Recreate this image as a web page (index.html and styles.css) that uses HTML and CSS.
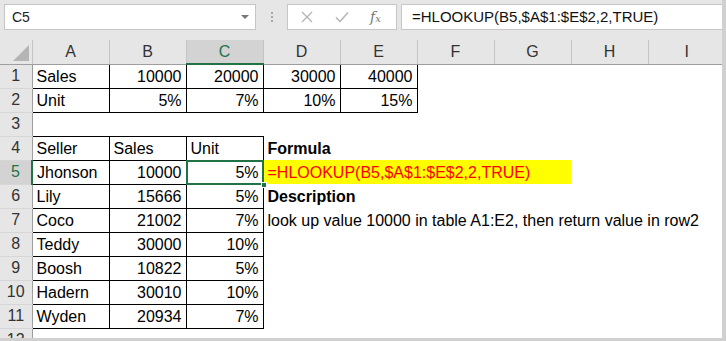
FILE: index.html
```html
<!DOCTYPE html>
<html lang="en">
<head>
  <meta charset="UTF-8">
  <title>HLOOKUP example</title>
  <link rel="stylesheet" href="styles.css">
</head>
<body>
<div class="frame">
  <div class="toolbar">
    <div class="name-box">
      <span>C5</span>
      <span class="caret"></span>
    </div>
    <div class="dots"><i></i><i></i><i></i></div>
    <div class="fx-box">
      <svg width="14" height="14" viewBox="0 0 14 14"><path d="M2 2 L12 12 M12 2 L2 12" stroke="#b3b3b3" stroke-width="1.3" fill="none"/></svg>
      <svg width="16" height="14" viewBox="0 0 16 14"><path d="M2 7.5 L6 11.5 L14 2.5" stroke="#b3b3b3" stroke-width="1.5" fill="none"/></svg>
      <span class="fx">f<small>x</small></span>
    </div>
    <div class="formula-box">=HLOOKUP(B5,$A$1:$E$2,2,TRUE)</div>
  </div>

  <table class="sheet">
    <colgroup>
      <col class="rh-col">
      <col><col><col><col><col><col><col><col><col>
    </colgroup>
    <tr class="col-heads">
      <th class="corner"><span class="tri"></span></th>
      <th>A</th><th>B</th><th class="sel-head">C</th><th>D</th><th>E</th><th>F</th><th>G</th><th>H</th><th>I</th>
    </tr>
    <tr>
      <th class="rh">1</th>
      <td class="b">Sales</td><td class="b num">10000</td><td class="b num">20000</td><td class="b num">30000</td><td class="b num">40000</td><td></td><td></td><td></td><td></td>
    </tr>
    <tr>
      <th class="rh">2</th>
      <td class="b">Unit</td><td class="b num">5%</td><td class="b num">7%</td><td class="b num">10%</td><td class="b num">15%</td><td></td><td></td><td></td><td></td>
    </tr>
    <tr>
      <th class="rh">3</th>
      <td></td><td></td><td></td><td></td><td></td><td></td><td></td><td></td><td></td>
    </tr>
    <tr>
      <th class="rh">4</th>
      <td class="b">Seller</td><td class="b">Sales</td><td class="b">Unit</td><td class="bold">Formula</td><td></td><td></td><td></td><td></td><td></td>
    </tr>
    <tr>
      <th class="rh sel-row">5</th>
      <td class="b">Jhonson</td><td class="b num">10000</td><td class="b num active">5%<span class="cursor"></span><span class="handle"></span></td>
      <td class="hl" colspan="4">=HLOOKUP(B5,$A$1:$E$2,2,TRUE)</td><td></td><td></td>
    </tr>
    <tr>
      <th class="rh">6</th>
      <td class="b">Lily</td><td class="b num">15666</td><td class="b num">5%</td><td class="bold">Description</td><td></td><td></td><td></td><td></td><td></td>
    </tr>
    <tr>
      <th class="rh">7</th>
      <td class="b">Coco</td><td class="b num">21002</td><td class="b num">7%</td><td class="spill" colspan="6">look up value 10000 in table A1:E2, then return value in row2</td>
    </tr>
    <tr>
      <th class="rh">8</th>
      <td class="b">Teddy</td><td class="b num">30000</td><td class="b num">10%</td><td></td><td></td><td></td><td></td><td></td><td></td>
    </tr>
    <tr>
      <th class="rh">9</th>
      <td class="b">Boosh</td><td class="b num">10822</td><td class="b num">5%</td><td></td><td></td><td></td><td></td><td></td><td></td>
    </tr>
    <tr>
      <th class="rh">10</th>
      <td class="b">Hadern</td><td class="b num">30010</td><td class="b num">10%</td><td></td><td></td><td></td><td></td><td></td><td></td>
    </tr>
    <tr>
      <th class="rh">11</th>
      <td class="b">Wyden</td><td class="b num">20934</td><td class="b num">7%</td><td></td><td></td><td></td><td></td><td></td><td></td>
    </tr>
    <tr>
      <th class="rh">12</th>
      <td></td><td></td><td></td><td></td><td></td><td></td><td></td><td></td><td></td>
    </tr>
  </table>
</div>
</body>
</html>
```

FILE: styles.css
```css
* { box-sizing: border-box; }
html, body { margin: 0; padding: 0; background: #fff; }
body { font-family: "Liberation Sans", Arial, sans-serif; color: #000; overflow: hidden; }

.frame {
  width: 726px;
  height: 341px;
  overflow: hidden;
  background: #fff;
  border-right: 4px solid #d0d0d0;
  border-bottom: 3px solid #d0d0d0;
}

/* formula bar */
.toolbar {
  height: 40px;
  background: #e6e6e6;
  display: flex;
  align-items: flex-start;
  padding: 4px 0 0 4px;
}
.name-box {
  width: 252px;
  height: 26px;
  background: #fff;
  border: 1px solid #c6c6c6;
  display: flex;
  align-items: center;
  justify-content: space-between;
  padding: 0 6px 0 7px;
  font-size: 14px;
  color: #222;
}
.caret {
  width: 0; height: 0;
  border-left: 4px solid transparent;
  border-right: 4px solid transparent;
  border-top: 4px solid #777;
}
.dots {
  width: 31px;
  height: 26px;
  display: flex;
  flex-direction: column;
  align-items: center;
  justify-content: center;
  gap: 2px;
}
.dots i { width: 2px; height: 2px; background: #a8a8a8; display: block; }
.fx-box {
  width: 110px;
  height: 26px;
  background: #fff;
  border: 1px solid #c6c6c6;
  display: flex;
  align-items: center;
  padding-left: 12px;
}
.fx-box svg:first-child { margin-right: 20px; }
.fx-box svg:nth-child(2) { margin-right: 20px; }
.fx {
  font-family: "DejaVu Serif", "Liberation Serif", serif;
  font-style: italic;
  font-size: 14px;
  color: #777;
}
.fx small { font-size: 10px; }
.formula-box {
  flex: 1;
  margin-left: 4px;
  height: 26px;
  background: #fff;
  border: 1px solid #c6c6c6;
  border-right: none;
  font-size: 15px;
  padding: 3px 0 0 10px;
  color: #111;
}

/* grid */
.sheet {
  border-collapse: collapse;
  table-layout: fixed;
  width: 725px;
  font-size: 16px;
}
.sheet col { width: 77px; }
.sheet col.rh-col { width: 32px; }
.sheet tr { height: 24px; }
.sheet td {
  padding: 0 4px 2px 4px;
  vertical-align: bottom;
  white-space: nowrap;
  overflow: visible;
  line-height: 19px;
}

.col-heads th {
  background: #e6e6e6;
  font-weight: normal;
  color: #333;
  font-size: 16px;
  border-right: 1px solid #c4c4c4;
  border-bottom: 1px solid #9e9e9e;
  padding: 0;
  height: 24px;
}
.col-heads th:last-child { border-right: none; }
.col-heads .sel-head {
  background: #d3d3d3;
  color: #217346;
  border-bottom: 2px solid #217346;
}
.corner { position: relative; }
.tri {
  position: absolute;
  right: 3px;
  bottom: 3px;
  width: 0; height: 0;
  border-left: 16px solid transparent;
  border-bottom: 16px solid #b5b5b5;
}

.rh {
  background: #e6e6e6;
  font-weight: normal;
  color: #333;
  font-size: 16px;
  border-right: 1px solid #9e9e9e;
  border-bottom: 1px solid #d6d6d6;
  padding: 0;
  text-align: center;
}
.rh.sel-row {
  background: #d3d3d3;
  color: #217346;
  border-right: 2px solid #217346;
}

.b { border: 1px solid #000; }
.num { text-align: right; }
.bold { font-weight: bold; }
.hl { background: #ffff00; color: #ff0000; }
.spill { overflow: visible; }

.active { position: relative; }
.cursor {
  position: absolute;
  left: -1px; top: -1px; right: -1px; bottom: -1px;
  border: 2px solid #217346;
}
.handle {
  position: absolute;
  right: -4px;
  bottom: -4px;
  width: 6px;
  height: 6px;
  background: #217346;
  border: 1px solid #fff;
}
```
